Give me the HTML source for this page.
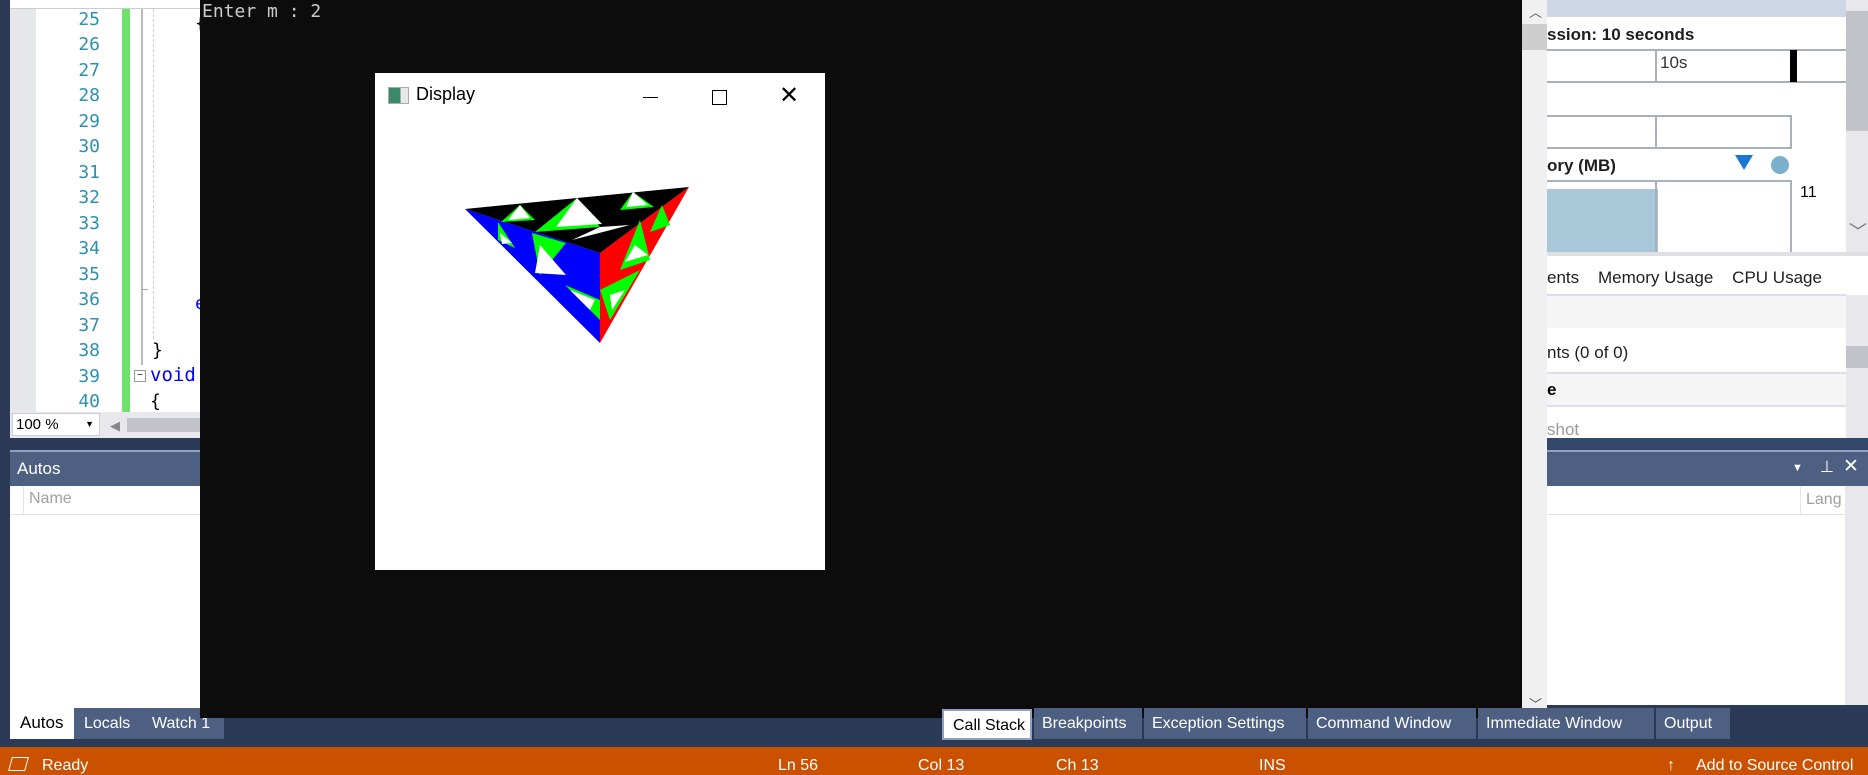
<!DOCTYPE html>
<html style="width:1868px;height:775px;overflow:hidden"><head><meta charset="utf-8"><style>
*{margin:0;padding:0;box-sizing:border-box}
body{width:1868px;height:775px;position:relative;overflow:hidden;background:#2b3a57;font-family:"Liberation Sans",sans-serif}
.a{position:absolute}
.ln{position:absolute;left:60px;width:40px;text-align:right;font:18px "DejaVu Sans Mono",monospace;color:#2b91af}
.tab{position:absolute;top:708px;height:31px;background:#4d6082;color:#fff;font-size:16px;line-height:31px;padding:0 8px}
</style></head><body>
<div class="a" style="left:10px;top:0;width:192px;height:9px;background:#fff;border-bottom:1px solid #ccc"></div>
<div class="a" style="left:10px;top:9px;width:26px;height:403px;background:#e6e7e8"></div>
<div class="a" style="left:36px;top:9px;width:166px;height:403px;background:#fff"></div>
<div class="a" style="left:122px;top:9px;width:8px;height:403px;background:#6ee06e"></div>
<div class="a" style="left:141px;top:9px;width:2px;height:356px;background:#bbb"></div>
<div class="a" style="left:141px;top:289px;width:7px;height:1px;background:#aaa"></div>
<div class="a" style="left:153px;top:9px;width:0;height:330px;border-left:1px dashed #ccc"></div>
<div class="ln" style="top:9px">25</div><div class="ln" style="top:34px">26</div><div class="ln" style="top:60px">27</div><div class="ln" style="top:85px">28</div><div class="ln" style="top:111px">29</div><div class="ln" style="top:136px">30</div><div class="ln" style="top:162px">31</div><div class="ln" style="top:187px">32</div><div class="ln" style="top:213px">33</div><div class="ln" style="top:238px">34</div><div class="ln" style="top:264px">35</div><div class="ln" style="top:289px">36</div><div class="ln" style="top:315px">37</div><div class="ln" style="top:340px">38</div><div class="ln" style="top:366px">39</div><div class="ln" style="top:391px">40</div>
<div class="a" style="left:152px;top:340px;font:18px 'DejaVu Sans Mono',monospace">}</div>
<div class="a" style="left:134px;top:370px;width:12px;height:12px;border:1px solid #999;background:#fff;font-size:10px;line-height:9px;text-align:center">−</div>
<div class="a" style="left:150px;top:364px;font:19px 'DejaVu Sans Mono',monospace;color:#00f">void</div>
<div class="a" style="left:150px;top:391px;font:18px 'DejaVu Sans Mono',monospace">{</div>
<div class="a" style="left:195px;top:13px;font:18px monospace">{</div>
<div class="a" style="left:195px;top:293px;font:18px monospace;color:#00f">e</div>
<div class="a" style="left:10px;top:412px;width:192px;height:26px;background:#e8e8ec"></div>
<div class="a" style="left:12px;top:413px;width:88px;height:23px;background:#fff;border:1px solid #ccd;font-size:15px;line-height:21px;padding-left:3px">100 %<span style="position:absolute;right:5px;font-size:9px">▼</span></div>
<div class="a" style="left:110px;top:418px;font-size:13px;color:#888">◀</div>
<div class="a" style="left:127px;top:418px;width:75px;height:14px;background:#c2c3c9"></div>
<div class="a" style="left:10px;top:450px;width:192px;height:36px;background:#4d6082;border-top:2px solid #8fa0c0;color:#fff;font-size:17px;line-height:34px;padding-left:7px">Autos</div>
<div class="a" style="left:10px;top:486px;width:192px;height:253px;background:#fff"></div>
<div class="a" style="left:10px;top:514px;width:192px;height:1px;background:#e4e4e4"></div>
<div class="a" style="left:23px;top:486px;width:1px;height:29px;background:#e4e4e4"></div>
<div class="a" style="left:29px;top:490px;font-size:16px;color:#a0a0a0">Name</div>
<div class="a" style="left:10px;top:706px;width:64px;height:33px;background:#fff;font-size:17px;line-height:33px;padding-left:10px">Autos</div>
<div class="tab" style="left:74px;width:70px;padding-left:10px">Locals</div>
<div class="tab" style="left:144px;width:80px;padding-left:8px">Watch 1</div>
<div class="a" style="left:1547px;top:0;width:321px;height:705px;background:#fff"></div>
<div class="a" style="left:1547px;top:0;width:299px;height:17px;background:#cfd6e5"></div>
<div class="a" style="left:1547px;top:25px;font-size:17px;font-weight:bold;color:#1e1e1e">ssion: 10 seconds</div>
<div class="a" style="left:1547px;top:49px;width:299px;height:34px;border-top:2px solid #a9b0bd;border-bottom:2px solid #a9b0bd"></div>
<div class="a" style="left:1655px;top:49px;width:2px;height:34px;background:#a9b0bd"></div>
<div class="a" style="left:1660px;top:53px;font-size:17px;color:#333">10s</div>
<div class="a" style="left:1790px;top:50px;width:7px;height:32px;background:#000"></div>
<div class="a" style="left:1547px;top:115px;width:245px;height:34px;border:2px solid #a9b0bd;border-left:none"></div>
<div class="a" style="left:1655px;top:115px;width:2px;height:34px;background:#a9b0bd"></div>
<div class="a" style="left:1547px;top:156px;font-size:17px;font-weight:bold;color:#1e1e1e">ory (MB)</div>
<div class="a" style="left:1735px;top:155px;width:0;height:0;border-left:9px solid transparent;border-right:9px solid transparent;border-top:15px solid #1a78d4"></div>
<div class="a" style="left:1771px;top:156px;width:18px;height:18px;border-radius:50%;background:#7ab0cc"></div>
<div class="a" style="left:1547px;top:180px;width:245px;height:72px;border-top:2px solid #a9b0bd;border-right:2px solid #a9b0bd"></div>
<div class="a" style="left:1547px;top:189px;width:111px;height:63px;background:#a8c8da"></div>
<div class="a" style="left:1655px;top:180px;width:2px;height:72px;background:#a9b0bd"></div>
<div class="a" style="left:1800px;top:184px;font-size:16px">11</div>
<div class="a" style="left:1846px;top:0;width:22px;height:252px;background:#e8e8ec"></div>
<div class="a" style="left:1846px;top:11px;width:22px;height:120px;background:#c2c3c9"></div>
<div class="a" style="left:1849px;top:218px;font-size:18px;color:#777">﹀</div>
<div class="a" style="left:1547px;top:252px;width:321px;height:4px;background:#e0e0e4"></div>
<div class="a" style="left:1547px;top:268px;font-size:17px;color:#1e1e1e">ents&nbsp;&nbsp;&nbsp;&nbsp;Memory Usage&nbsp;&nbsp;&nbsp;&nbsp;CPU Usage</div>
<div class="a" style="left:1547px;top:294px;width:299px;height:34px;background:#f5f5f5;border-top:2px solid #dde"></div>
<div class="a" style="left:1547px;top:343px;font-size:17px;color:#1e1e1e">nts (0 of 0)</div>
<div class="a" style="left:1547px;top:372px;width:299px;height:35px;background:#f5f5f5;border-top:2px solid #dde;border-bottom:2px solid #dde"></div>
<div class="a" style="left:1547px;top:380px;font-size:17px;font-weight:bold">e</div>
<div class="a" style="left:1547px;top:420px;font-size:17px;color:#999">shot</div>
<div class="a" style="left:1846px;top:295px;width:22px;height:143px;background:#e8e8ec"></div>
<div class="a" style="left:1846px;top:346px;width:22px;height:22px;background:#c2c3c9"></div>
<div class="a" style="left:1547px;top:438px;width:321px;height:12px;background:#354869"></div>
<div class="a" style="left:1547px;top:450px;width:321px;height:36px;background:#4d6082;border-top:2px solid #8fa0c0"></div>
<div class="a" style="left:1792px;top:462px;color:#fff;font-size:11px">▼</div>
<div class="a" style="left:1820px;top:457px;color:#fff;font-size:16px">⊥</div>
<div class="a" style="left:1843px;top:455px;color:#fff;font-size:19px">✕</div>
<div class="a" style="left:1547px;top:486px;width:299px;height:29px;border-bottom:1px solid #e4e4e4"></div>
<div class="a" style="left:1800px;top:486px;width:1px;height:29px;background:#e4e4e4"></div>
<div class="a" style="left:1806px;top:491px;font-size:16px;color:#a0a0a0">Lang</div>
<div class="a" style="left:1845px;top:486px;width:23px;height:219px;background:#e8e8ec"></div>
<div class="a" style="left:200px;top:0;width:1322px;height:718px;background:#0c0c0c"></div>
<div class="a" style="left:202px;top:1px;font:18px 'DejaVu Sans Mono',monospace;color:#ccc">Enter m : 2</div>
<div class="a" style="left:1522px;top:0;width:25px;height:718px;background:#f0f0f0"></div>
<div class="a" style="left:1522px;top:24px;width:25px;height:26px;background:#cdcdcd"></div>
<div class="a" style="left:1529px;top:2px;font-size:13px;color:#555">︿</div>
<div class="a" style="left:1529px;top:694px;font-size:13px;color:#555">﹀</div>
<div class="a" style="left:375px;top:73px;width:450px;height:497px;background:#fff">
 <div class="a" style="left:13px;top:14px;width:21px;height:17px;border:1px solid #aaa;background:linear-gradient(90deg,#3a8a6a 60%,#e8e8e8 60%)"></div>
 <div class="a" style="left:41px;top:11px;font-size:18px">Display</div>
 <div class="a" style="left:268px;top:24px;width:15px;height:1px;background:#000"></div>
 <div class="a" style="left:337px;top:17px;width:15px;height:15px;border:1px solid #000"></div>
 <div class="a" style="left:404px;top:8px;font-size:24px;font-weight:100">✕</div>
 <svg class="a" style="left:0;top:0" width="450" height="497" viewBox="375 73 450 497">
  <polygon points="465,209 689,187 600,253" fill="#000"/>
  <polygon points="465,209 600,253 600,343" fill="#0000ff"/>
  <polygon points="600,253 689,187 600,343" fill="#ff0000"/>
  <polygon points="577,198 600,227 535,232" fill="#0f0"/>
  <polygon points="577,198 602,224 556,227" fill="#fff"/>
  <polygon points="520,205 535,220 501,222" fill="#0f0"/>
  <polygon points="520,205 530,218 508,220" fill="#fff"/>
  <polygon points="633,192 654,207 620,210" fill="#0f0"/>
  <polygon points="633,192 648,205 626,207" fill="#fff"/>
  <polygon points="600,227 640,222 600,253" fill="#000"/>
  <polygon points="600,227 630,225 572,240" fill="#fff"/>
  <polygon points="532,233 566,243 540,275" fill="#0f0"/>
  <polygon points="540,245 566,275 535,273" fill="#fff"/>
  <polygon points="498,222 515,248 498,240" fill="#0f0"/>
  <polygon points="500,233 512,243 502,244" fill="#fff"/>
  <polygon points="565,285 600,300 600,320" fill="#0f0"/>
  <polygon points="570,290 595,300 590,310" fill="#fff"/>
  <polygon points="640,220 650,260 620,270" fill="#0f0"/>
  <polygon points="635,245 648,255 625,262" fill="#fff"/>
  <polygon points="662,205 670,225 650,232" fill="#0f0"/>
  <polygon points="600,290 640,270 610,320" fill="#0f0"/>
  <polygon points="610,295 625,290 612,310" fill="#fff"/>
 </svg>
</div>
<div class="a" style="left:942px;top:709px;width:90px;height:31px;background:#fff;font-size:16px;line-height:29px;padding-left:9px;border:2px solid #8fa0c0">Call Stack</div>
<div class="tab" style="left:1034px;width:108px">Breakpoints</div>
<div class="tab" style="left:1144px;width:162px">Exception Settings</div>
<div class="tab" style="left:1308px;width:168px">Command Window</div>
<div class="tab" style="left:1478px;width:176px">Immediate Window</div>
<div class="tab" style="left:1656px;width:74px">Output</div>
<div class="a" style="left:0;top:747px;width:1868px;height:28px;background:#ca5100;color:#fff;font-size:16px;line-height:38px;overflow:hidden">
 <span class="a" style="left:10px;top:10px;width:17px;height:14px;border:1.5px solid #fff;transform:skewX(-15deg)"></span>
 <span class="a" style="left:42px;top:0">Ready</span>
 <span class="a" style="left:778px;top:0">Ln 56</span>
 <span class="a" style="left:918px;top:0">Col 13</span>
 <span class="a" style="left:1056px;top:0">Ch 13</span>
 <span class="a" style="left:1259px;top:0">INS</span>
 <span class="a" style="left:1667px;top:0">↑</span>
 <span class="a" style="left:1696px;top:0;white-space:nowrap">Add to Source Control</span>
</div>
</body></html>
